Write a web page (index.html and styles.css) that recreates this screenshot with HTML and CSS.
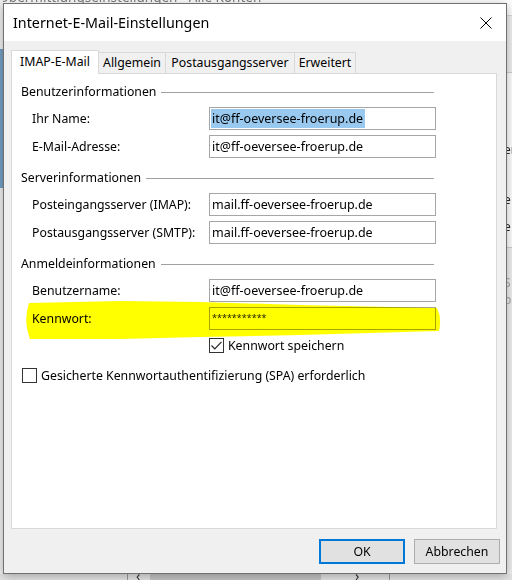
FILE: index.html
```html
<!DOCTYPE html>
<html lang="de">
<head>
    <meta charset="utf-8">
    <title>Internet-E-Mail-Einstellungen</title>
    <link rel="stylesheet" href="styles.css">
</head>
<body>
    <!-- Outlook window behind the dialog -->
    <div class="bg-caption">Übermittlungseinstellungen - Alle Konten</div>
    <div class="bg-left"><div class="bg-left-sel"></div></div>
    <div class="bg-right">
        <div class="bg-right-top"></div>
        <div class="bg-right-bar"></div>
        <div class="bg-right-list">
            <span class="frag frag-1">er</span>
            <span class="frag frag-2">e</span>
            <span class="frag frag-3">e</span>
        </div>
        <span class="frag frag-4">S</span>
        <span class="frag frag-5">p</span>
    </div>
    <div class="bg-bottom">
        <span class="bg-tick bg-tick-a"></span>
        <span class="bg-arrow bg-arrow-a">&lsaquo;</span>
        <span class="bg-thumb"></span>
        <span class="bg-arrow bg-arrow-b">&rsaquo;</span>
        <span class="bg-tick bg-tick-b"></span>
    </div>

    <div class="dialog">
        <div class="titlebar">
            <span class="title">Internet-E-Mail-Einstellungen</span>
            <svg class="close" width="12" height="12" viewBox="0 0 12 12">
                <path d="M0.5 0.5 L11.5 11.5 M11.5 0.5 L0.5 11.5" stroke="#000" stroke-width="1" fill="none"/>
            </svg>
        </div>

        <div class="content">
            <div class="tabs">
                <div class="tab active">IMAP-E-Mail</div>
                <div class="tab tab-general">Allgemein</div>
                <div class="tab tab-smtp">Postausgangsserver</div>
                <div class="tab tab-advanced">Erweitert</div>
            </div>

            <div class="panel">
                <div class="group">
                    <div class="group-title"><span>Benutzerinformationen</span></div>
                    <div class="row">
                        <span class="label">Ihr Name:</span>
                        <div class="field"><span class="selected">it@ff-oeversee-froerup.de</span></div>
                    </div>
                    <div class="row">
                        <span class="label">E-Mail-Adresse:</span>
                        <div class="field">it@ff-oeversee-froerup.de</div>
                    </div>
                </div>

                <div class="group">
                    <div class="group-title"><span>Serverinformationen</span></div>
                    <div class="row">
                        <span class="label">Posteingangsserver (IMAP):</span>
                        <div class="field">mail.ff-oeversee-froerup.de</div>
                    </div>
                    <div class="row">
                        <span class="label">Postausgangsserver (SMTP):</span>
                        <div class="field">mail.ff-oeversee-froerup.de</div>
                    </div>
                </div>

                <div class="group">
                    <div class="group-title"><span>Anmeldeinformationen</span></div>
                    <div class="row">
                        <span class="label">Benutzername:</span>
                        <div class="field">it@ff-oeversee-froerup.de</div>
                    </div>
                    <div class="row">
                        <span class="label">Kennwort:</span>
                        <div class="field password">***********</div>
                    </div>
                </div>

                <div class="check-row save-row">
                    <span class="checkbox">
                        <svg width="13" height="13" viewBox="0 0 13 13">
                            <path d="M1.5 6.5 L4.8 9.8 L11.5 2.8" stroke="#222" stroke-width="1.2" fill="none"/>
                        </svg>
                    </span>
                    <span>Kennwort speichern</span>
                </div>

                <div class="check-row spa-row">
                    <span class="checkbox"></span>
                    <span>Gesicherte Kennwortauthentifizierung (SPA) erforderlich</span>
                </div>
            </div>

            <div class="buttons">
                <button class="btn default">OK</button>
                <button class="btn">Abbrechen</button>
            </div>
        </div>
    </div>

    <!-- yellow highlighter stroke across the password row -->
    <svg class="marker" width="512" height="580" viewBox="0 0 512 580">
        <path d="M29 303 L120 301 L200 302 L300 305 L437 308 Q442 318 439 331 L300 335 L200 337 L120 339 L30 339 Q23 321 29 303 Z" fill="#ffff00"/>
    </svg>
</body>
</html>
```

FILE: styles.css
```css
* {
    box-sizing: border-box;
}

body {
    position: relative;
    width: 512px;
    height: 580px;
    margin: 0;
    overflow: hidden;
    background-color: #fff;
    color: #000;
    font-family: "Noto Sans", "Open Sans", sans-serif;
    font-size: 12.3px;
}

/* background window */

.bg-caption {
    position: absolute;
    left: -1px;
    top: -12px;
    font-size: 13.5px;
    color: #7d7d7d;
    white-space: nowrap;
}

.bg-left {
    position: absolute;
    left: 0;
    top: 0;
    width: 3px;
    height: 580px;
    background-color: #f0f0f0;
}

.bg-left-sel {
    margin-top: 49px;
    height: 139px;
    background-color: #74a0c4;
}

.bg-right {
    position: absolute;
    left: 507px;
    top: 0;
    width: 5px;
    height: 580px;
    overflow: hidden;
    background-color: #f0f0f0;
}

.bg-right-top {
    height: 16px;
    background-color: #fff;
    border-bottom: 1px solid #dadada;
}

.bg-right-bar {
    height: 57px;
    border-bottom: 1px solid #cfcfcf;
}

.bg-right-list {
    position: relative;
    height: 175px;
    background-color: #fff;
    border-bottom: 1px solid #cfcfcf;
}

.frag {
    position: absolute;
    left: -3px;
    font-size: 12px;
    line-height: 14px;
    color: #262626;
}

.frag-1 { top: 70px; }
.frag-2 { top: 120px; }
.frag-3 { top: 147px; }
.frag-4 { top: 276px; color: #a8a8a8; }
.frag-5 { top: 293px; color: #a8a8a8; }

.bg-bottom {
    position: absolute;
    left: 0;
    top: 574px;
    width: 512px;
    height: 6px;
    background-color: #e4e4e4;
}

.bg-tick {
    position: absolute;
    top: 0;
    width: 1px;
    height: 6px;
    background-color: #9a9a9a;
}

.bg-tick-a { left: 127px; }
.bg-tick-b { left: 389px; }

.bg-thumb {
    position: absolute;
    left: 150px;
    top: 0;
    width: 171px;
    height: 6px;
    background-color: #c4c4c4;
}

.bg-arrow {
    position: absolute;
    top: -5px;
    font-size: 14px;
    line-height: 14px;
    color: #333;
}

.bg-arrow-a { left: 136px; }
.bg-arrow-b { left: 355px; }

/* dialog */

.dialog {
    position: absolute;
    left: 3px;
    top: 3px;
    width: 504px;
    height: 571px;
    display: flex;
    flex-direction: column;
    background-color: #f0f0f0;
    border: 1px solid #707070;
    box-shadow: 0 2px 10px rgba(0, 0, 0, 0.3);
}

.titlebar {
    height: 37px;
    display: flex;
    align-items: center;
    padding: 0 14px 0 9px;
    background-color: #fff;
}

.title {
    flex: 1;
    font-size: 14.3px;
}

.close {
    display: block;
}

.content {
    flex: 1;
    display: flex;
    flex-direction: column;
    padding-top: 9px;
}

.tabs {
    position: relative;
    z-index: 1;
    display: flex;
    align-items: flex-end;
    height: 24px;
    margin: 0 9px -1px 7px;
}

.tab {
    height: 22px;
    line-height: 20px;
    text-align: center;
    background-color: #f0f0f0;
    border: 1px solid #d9d9d9;
    border-left: none;
}

.tab.active {
    width: 88px;
    height: 24px;
    line-height: 22px;
    background-color: #fff;
    border-left: 1px solid #d9d9d9;
    border-bottom: none;
}

.tab-general { width: 67px; }
.tab-smtp { width: 129px; }
.tab-advanced { width: 61px; }

.panel {
    height: 456px;
    margin: 0 9px 0 7px;
    padding-top: 10px;
    background-color: #fff;
    border: 1px solid #d9d9d9;
}

.group + .group {
    margin-top: 12px;
}

.group-title {
    display: flex;
    align-items: center;
    width: 413px;
    height: 16px;
    margin-left: 9px;
    line-height: 16px;
}

.group-title::after {
    content: "";
    flex: 1;
    height: 1px;
    margin-left: 5px;
    background-color: #a0a0a0;
}

.row {
    display: flex;
    align-items: center;
    margin-top: 5px;
    padding-left: 20px;
}

.group-title + .row {
    margin-top: 7px;
}

.label {
    width: 177px;
}

.field {
    width: 227px;
    height: 23px;
    padding-left: 2px;
    line-height: 21px;
    font-size: 12.5px;
    white-space: nowrap;
    border: 1px solid #a6a6a6;
}

.selected {
    display: inline-block;
    line-height: 19px;
    padding: 0 2px 0 1px;
    margin-left: -1px;
    background-color: #99c9ef;
}

.password {
    font-size: 9px;
    line-height: 19px;
    color: #222;
}

.check-row {
    display: flex;
    align-items: center;
}

.save-row {
    margin-top: 7px;
    padding-left: 197px;
}

.spa-row {
    margin-top: 13px;
    padding-left: 10px;
}

.checkbox {
    width: 15px;
    height: 15px;
    margin-right: 4px;
    border: 1px solid #333;
    background-color: #fff;
}

.checkbox svg {
    display: block;
}

.buttons {
    display: flex;
    justify-content: flex-end;
    gap: 9px;
    margin: 10px 6px 0 0;
}

.btn {
    width: 86px;
    height: 25px;
    padding: 0;
    font-family: inherit;
    font-size: 12.3px;
    color: #000;
    background-color: #e1e1e1;
    border: 1px solid #adadad;
}

.btn.default {
    border: 2px solid #0078d7;
}

.marker {
    position: absolute;
    left: 0;
    top: 0;
    pointer-events: none;
    mix-blend-mode: multiply;
}
```
